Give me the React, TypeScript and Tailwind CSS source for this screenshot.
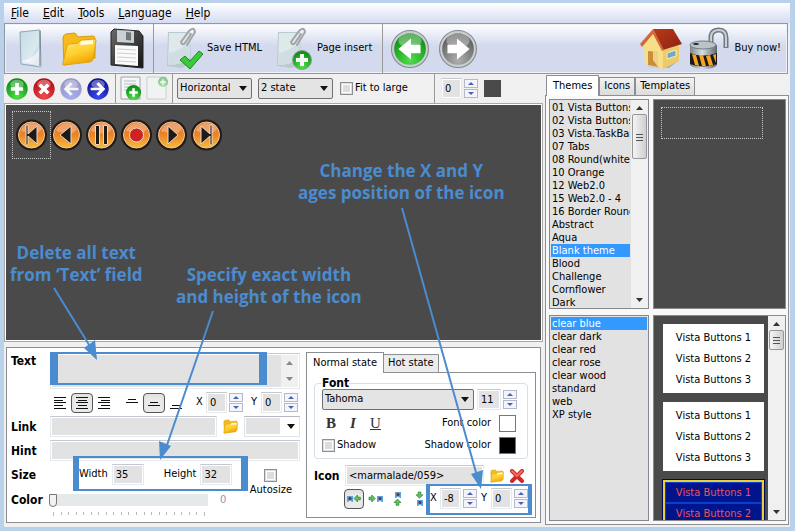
import React, { useState } from "react";

const THEMES = [
  "01 Vista Buttons",
  "02 Vista Buttons",
  "03 Vista.TaskBar",
  "07 Tabs",
  "08 Round(white",
  "10 Orange",
  "12 Web2.0",
  "15 Web2.0 - 4",
  "16 Border Round",
  "Abstract",
  "Aqua",
  "Blank theme",
  "Blood",
  "Challenge",
  "Cornflower",
  "Dark",
];

const STYLES = [
  "clear blue",
  "clear dark",
  "clear red",
  "clear rose",
  "clear wood",
  "standard",
  "web",
  "XP style",
];

const MENU = ["File", "Edit", "Tools", "Language", "Help"];

const field =
  "h-[21px] border border-[#e3e9ef] border-t-[#c4c8d0] bg-[#e2e2e2] outline-1 -outline-offset-2 outline-white px-[3px] text-black";

// Gradients shared by all of the icons
const Defs = () => (
  <svg className="absolute size-0" aria-hidden="true">
    <defs>
      <linearGradient id="paper" x1="0" y1="0" x2="1" y2="1">
        <stop offset="0" stopColor="#c5dbe3" />
        <stop offset="0.6" stopColor="#dbe9f0" />
        <stop offset="1" stopColor="#a9bccb" />
      </linearGradient>
      <linearGradient id="folder" x1="0" y1="0" x2="0.4" y2="1">
        <stop offset="0" stopColor="#ffe77a" />
        <stop offset="0.6" stopColor="#ffcf2e" />
        <stop offset="1" stopColor="#f0a808" />
      </linearGradient>
      <linearGradient id="floppy" x1="0" y1="0" x2="1" y2="1">
        <stop offset="0" stopColor="#6a6a6a" />
        <stop offset="1" stopColor="#151515" />
      </linearGradient>
      <radialGradient id="green" cx="0.5" cy="0.85" r="0.8">
        <stop offset="0" stopColor="#4fe04a" />
        <stop offset="1" stopColor="#0c8a14" />
      </radialGradient>
      <radialGradient id="red" cx="0.5" cy="0.85" r="0.8">
        <stop offset="0" stopColor="#f04a4a" />
        <stop offset="1" stopColor="#b00c14" />
      </radialGradient>
      <radialGradient id="blue" cx="0.5" cy="0.85" r="0.8">
        <stop offset="0" stopColor="#3a4af0" />
        <stop offset="1" stopColor="#0c128c" />
      </radialGradient>
      <radialGradient id="gray" cx="0.5" cy="0.85" r="0.8">
        <stop offset="0" stopColor="#b0b0b0" />
        <stop offset="1" stopColor="#5a5a5a" />
      </radialGradient>
      <linearGradient id="orange" x1="0" y1="0" x2="0" y2="1">
        <stop offset="0" stopColor="#e8742c" />
        <stop offset="0.5" stopColor="#ea8428" />
        <stop offset="1" stopColor="#f6bc3c" />
      </linearGradient>
      <linearGradient id="roof" x1="0" y1="0" x2="1" y2="1">
        <stop offset="0" stopColor="#b83a18" />
        <stop offset="1" stopColor="#8c2210" />
      </linearGradient>
      <linearGradient id="steel" x1="0" y1="0" x2="1" y2="0">
        <stop offset="0" stopColor="#7c868c" />
        <stop offset="0.45" stopColor="#d8e0e4" />
        <stop offset="1" stopColor="#5c666c" />
      </linearGradient>
    </defs>
  </svg>
);

const PageIcon = () => (
  <svg width="24" height="40" viewBox="0 0 24 40">
    <path d="M1 3 21 1l1 37L2 35Z" fill="url(#paper)" stroke="#8fa8b5" />
    <path d="M2 32C12 30 18 26 21 18l1 20Z" fill="#fff" opacity="0.6" />
    <path d="M21 2v35" stroke="#5f7684" />
  </svg>
);

const FolderIcon = ({ size = 36 }: { size?: number }) => (
  <svg width={size} height={size} viewBox="0 0 36 36">
    <path d="M2 7q0-3 3-4l9-1 3 4 15-1q2 0 2 3v19L3 34Z" fill="#f5bb1c" stroke="#d99a0c" />
    <path d="M6 15q0-2 2-2l9-1 3-3 13-1q2 0 2 2l-3 18q0 2-3 3L3 34q-2 0-1-2Z" fill="url(#folder)" stroke="#e0a312" />
    <path d="M20 10l12-1v4l-13 1Z" fill="#fffbe8" />
  </svg>
);

const FloppyIcon = () => (
  <svg width="36" height="42" viewBox="0 0 36 42">
    <path d="M2 4 5 1l25 2 4 5v32L2 37Z" fill="url(#floppy)" stroke="#222" />
    <path d="M8 2l17 1v12L8 14Z" fill="#c9d1d4" />
    <path d="M17 4l5 .4v8L17 12Z" fill="#6e7678" />
    <path d="M6 17l23 1v20L6 36Z" fill="#fafafa" />
    <path d="M8 21l19 1M8 25l19 1M8 29l19 1M8 33l19 1" stroke="#ccd0d2" />
  </svg>
);

const ClipPage = ({ children }: { children: React.ReactNode }) => (
  <svg width="38" height="44" viewBox="0 0 38 44">
    <path d="M2 5h22l1 32-10 4L1 39Z" fill="#b9c9d0" />
    <path d="M3 6h20l1 24q-8 8-22 8Z" fill="#e0e9ea" />
    <path d="M3 26q12-2 20-12l1 16q-8 8-22 8Z" fill="#d0dde2" />
    <path
      d="M25 7l-6 9q-3 3-4-1l8-11q5-5 6 1l-8 13"
      fill="none"
      stroke="#a2a6a8"
      strokeWidth="2"
      strokeLinecap="round"
    />
    {children}
  </svg>
);

type BallProps = { size: number; fill: string; d: string; rim?: boolean; faded?: boolean };

const Ball = ({ size, fill, d, rim, faded }: BallProps) => (
  <svg width={size} height={size} viewBox="0 0 36 36" className={faded ? "opacity-40" : ""}>
    {rim && <circle cx="18" cy="18" r="17.5" fill="#c9ced0" stroke="#85898c" />}
    <circle cx="18" cy="18" r={rim ? 15 : 17.5} fill={fill} />
    <ellipse cx="18" cy="10" rx="11" ry="7" fill="#fff" opacity="0.35" />
    <path d={d} fill="#fff" />
  </svg>
);

const PLUS = "M15 8h6v7h7v6h-7v7h-6v-7H8v-6h7Z";
const CROSS = "M13 9l5 5 5-5 4 4-5 5 5 5-4 4-5-5-5 5-4-4 5-5-5-5Z";
const LEFT = "M7 18 19 8v6h9v8h-9v6Z";
const RIGHT = "M29 18 17 8v6H8v8h9v6Z";
const THIN_LEFT = "M6 18 17 7l4 3-6 6h15v4H15l6 6-4 3Z";
const THIN_RIGHT = "M30 18 19 7l-4 3 6 6H6v4h15l-6 6 4 3Z";

const HouseIcon = () => (
  <svg width="44" height="43" viewBox="0 0 44 43">
    <path d="M6 38l10 3 22-6-8 6H14Z" fill="#a9afbb" />
    <path d="M5 17 15 5l10 17-1 20L6 37Z" fill="#f6df86" />
    <path d="M24 23l16-5v16l-16 8Z" fill="#ecca68" />
    <path d="M14 2h20l9 15-19 6Z" fill="url(#roof)" />
    <path d="M14 2 1 17l2 3L14 7l9 17 2-1Z" fill="#d4683a" />
    <path d="M9 24l10 1v15l-10-2Z" fill="#c98f38" />
    <path d="M14 24l5 1v15l-5-7Z" fill="#f0d088" />
    <path d="M28 26l9-3v6l-9 3Z" fill="#6ea9c8" stroke="#f7edc0" />
  </svg>
);

const LockIcon = () => (
  <svg width="40" height="43" viewBox="0 0 40 43">
    <path d="M22 18V9q1-6 8-6t7 8v10" fill="none" stroke="#6f7a80" strokeWidth="5" />
    <path d="M22 18V9q1-6 8-6t7 8v9" fill="none" stroke="#c8d0d4" strokeWidth="2" />
    <path d="M1 18v20q4 4 14 4t13-4V18Z" fill="url(#steel)" />
    <ellipse cx="14" cy="18" rx="13" ry="4" fill="#b9c3c8" stroke="#737d83" />
    <ellipse cx="7" cy="17" rx="3" ry="1" fill="#222" />
    <path d="M1 26q13 5 27 0v11q-14 5-27 0Z" fill="#1c1a18" />
    <path d="M3 27l4 1 3 11-4-1ZM10 28h4l3 11h-4ZM17 29l4-1 3 10-4 1ZM24 28l3-1v9Z" fill="#f8a420" />
  </svg>
);

const DocPlus = ({ faded }: { faded?: boolean }) => (
  <svg width="22" height="25" viewBox="0 0 22 25" className={faded ? "opacity-45" : ""}>
    <path d="M1 1h19v22H1Z" fill="#f4f7f7" stroke="#9aa6aa" />
    {!faded && <path d="M4 5h12M4 8h12M4 11h12M4 14h6" stroke="#b4bcc0" />}
    <g transform={faded ? "translate(12 1) scale(0.28)" : "translate(6 9) scale(0.42)"}>
      <circle cx="18" cy="18" r="18" fill="url(#green)" />
      <path d={PLUS} fill="#fff" />
    </g>
  </svg>
);

const MediaButton = ({ label, children }: { label: string; children: React.ReactNode }) => (
  <button aria-label={label}>
    <svg width="31" height="32" viewBox="0 0 31 32" className="block">
      <circle cx="15.5" cy="16" r="15.5" fill="#221c18" />
      <circle cx="15.5" cy="16" r="13" fill="url(#orange)" stroke="#f4c79a" />
      <path d="M5 12q3-8 11-8t10 6q-4 5-8 5Z" fill="#fff" opacity="0.3" />
      <g fill="#1e1a18" stroke="#ead9c8" strokeWidth="1">
        {children}
      </g>
    </svg>
  </button>
);

const Caret = () => (
  <svg width="8" height="5" viewBox="0 0 8 5" className="pointer-events-none absolute right-[5px] top-2">
    <path d="M0 0h8L4 5Z" fill="#111" />
  </svg>
);

type PickProps = { label: string; value: string; className: string; plain?: boolean };

const Pick = ({ label, value, className, plain }: PickProps) => (
  <div className={`relative ${className}`}>
    <select
      aria-label={label}
      className={`h-[21px] w-full appearance-none pl-0.5 pr-4 text-black ${
        plain
          ? "border border-[#dfe4ea] border-t-[#b4b8c0] bg-white"
          : "rounded-xs border border-[#707070] bg-[#e4e4e4]"
      }`}
    >
      <option>{value}</option>
    </select>
    {plain && <span className="pointer-events-none absolute left-0.5 top-0.5 h-4 w-[34px] bg-[#e2e2e2]" />}
    <Caret />
  </div>
);

const Arrow = ({ down }: { down?: boolean }) => (
  <svg width="6" height="3" viewBox="0 0 6 3">
    <path d={down ? "M0 0h6L3 3Z" : "M0 3h6L3 0Z"} fill="#4c60b4" />
  </svg>
);

type SpinProps = { id: string; label?: string; initial: number; wide?: boolean };

const Spin = ({ id, label, initial, wide }: SpinProps) => {
  const [value, setValue] = useState(initial);

  return (
    <div className="flex items-center gap-0.5">
      {label && (
        <label htmlFor={id} className="w-2">
          {label}
        </label>
      )}
      <input
        id={id}
        aria-label={label ?? id}
        value={value}
        onChange={(e) => setValue(Number(e.target.value) || 0)}
        className={`${field} ${wide ? "w-6" : "w-[21px]"}`}
      />
      <div className="flex flex-col gap-px">
        <button
          aria-label="Increase"
          onClick={() => setValue(value + 1)}
          className="flex h-[9px] w-[14px] items-center justify-center border border-[#b4b8cc] bg-[#f4f5fb]"
        >
          <Arrow />
        </button>
        <button
          aria-label="Decrease"
          onClick={() => setValue(value - 1)}
          className="flex h-[9px] w-[14px] items-center justify-center border border-[#b4b8cc] bg-[#f4f5fb]"
        >
          <Arrow down />
        </button>
      </div>
    </div>
  );
};

const box =
  "size-[13px] appearance-none border border-[#8e8f8f] bg-[#dcdcdc] outline-1 -outline-offset-3 outline-white checked:bg-[#4a78c8]";

const ScrollBar = ({ thumb, dim }: { thumb?: string; dim?: boolean }) => (
  <div className="flex w-[17px] shrink-0 flex-col items-center justify-between bg-[#f0f0f0] py-1.5">
    <svg width="7" height="4" viewBox="0 0 7 4" className="shrink-0">
      <path d="M0 4h7L3.5 0Z" fill={dim ? "#888" : "#333"} />
    </svg>
    {thumb && (
      <div
        className={`mt-1 mb-auto flex w-[15px] items-center justify-center rounded-xs border border-[#979797] bg-linear-to-r from-[#f4f4f4] to-[#cfcfcf] ${thumb}`}
      >
        <svg width="7" height="8" viewBox="0 0 7 8">
          <path d="M0 1.5h7M0 4.5h7M0 7.5h7" stroke="#555" />
        </svg>
      </div>
    )}
    <svg width="7" height="4" viewBox="0 0 7 4" className="shrink-0">
      <path d="M0 0h7L3.5 4Z" fill={dim ? "#888" : "#333"} />
    </svg>
  </div>
);

type ListProps = { label: string; items: string[]; initial: string; scroll?: boolean };

const ListBox = ({ label, items, initial, scroll }: ListProps) => {
  const [selected, setSelected] = useState(initial);

  return (
    <div className="flex w-[100px] shrink-0 overflow-hidden border border-[#828790] bg-[#e2e2e2]">
      <ul aria-label={label} className="min-w-0 flex-1 px-px pt-px">
        {items.map((item) => (
          <li key={item}>
            <button
              onClick={() => setSelected(item)}
              className={`block h-[13px] w-full overflow-hidden whitespace-nowrap pl-px text-left leading-[13px] ${
                item === selected ? "bg-[#3399ff] text-white" : ""
              }`}
            >
              {item}
            </button>
          </li>
        ))}
      </ul>
      {scroll && <ScrollBar thumb="h-[45px]" />}
    </div>
  );
};

const AlignIcon = ({ d, label, active }: { d: string; label: string; active?: boolean }) => (
  <button
    aria-label={label}
    className={`flex h-5 w-[22px] items-center justify-center ${
      active ? "rounded-sm border border-[#555] bg-[#eaeaea] shadow-inner" : ""
    }`}
  >
    <svg width="13" height="12" viewBox="0 0 13 12">
      <path d={d} stroke="#111" />
    </svg>
  </button>
);

const ARROWS: Record<string, string> = {
  left: "M0 5l5-5v3h4v4H5v3Z",
  right: "M9 5 4 0v3H0v4h4v3Z",
  up: "M5 0l5 5H7v4H3V5H0Z",
  down: "M5 9 0 4h3V0h4v4h3Z",
};

const Person = ({ x, y }: { x: number; y: number }) => (
  <g transform={`translate(${x} ${y})`}>
    <rect width="6" height="6" fill="#5aa0e0" />
    <circle cx="3" cy="2.5" r="1.5" fill="#5a3a28" />
    <path d="M1 6q2-3 4 0Z" fill="#f4e4d8" />
  </g>
);

type PlaceProps = { label: string; dir: string; px: number; py: number; ax: number; ay: number; active?: boolean };

const PlaceIcon = ({ label, dir, px, py, ax, ay, active }: PlaceProps) => (
  <button
    aria-label={label}
    className={`flex size-5 items-center justify-center ${
      active ? "rounded-sm border border-[#555] bg-[#eaeaea] shadow-inner" : ""
    }`}
  >
    <svg width="16" height="16" viewBox="0 0 16 16" className="shrink-0">
      <Person x={px} y={py} />
      <path d={ARROWS[dir]} transform={`translate(${ax} ${ay}) scale(0.7)`} fill="#5fc060" stroke="#2c8a38" />
    </svg>
  </button>
);

const Separator = () => <span className="w-px self-stretch bg-[#9a9a9a]" />;

const MenuBar = () => (
  <nav className="flex h-5 items-center gap-3.5 bg-linear-to-b from-white via-[#e9edf8] via-50% to-[#d5dcef] pl-[7px] text-xs">
    {MENU.map((item) => (
      <button key={item}>
        <span className="underline">{item[0]}</span>
        {item.slice(1)}
      </button>
    ))}
  </nav>
);

const Toolbar = () => (
  <div className="mr-0.5 flex h-[51px] items-center border border-[#9298a2] bg-linear-to-b from-white to-[#d3daed] to-45% shadow-[inset_0_0_0_1px_#eef1f8]">
    <div className="flex h-full items-center gap-3 pl-[14px] pr-2">
      <button aria-label="New">
        <PageIcon />
      </button>
      <button aria-label="Open" className="ml-1.5">
        <FolderIcon />
      </button>
      <button aria-label="Save">
        <FloppyIcon />
      </button>
    </div>
    <Separator />
    <button className="ml-3 flex items-center gap-[3px]">
      <ClipPage>
        <path d="M14 33l5-4 5 5 9-10 4 3-13 15Z" fill="#3cc83c" stroke="#178c1c" />
      </ClipPage>
      Save HTML
    </button>
    <button className="ml-3.5 flex items-center gap-[3px]">
      <ClipPage>
        <circle cx="26" cy="33" r="9.5" fill="url(#green)" stroke="#8ea090" />
        <path d="M24 27h4v4h4v4h-4v4h-4v-4h-4v-4h4Z" fill="#f4f8f4" />
      </ClipPage>
      Page insert
    </button>
    <span className="w-2.5" />
    <Separator />
    <div className="ml-2 flex gap-2.5">
      <button aria-label="Back">
        <Ball size={38} fill="url(#green)" d={LEFT} rim />
      </button>
      <button aria-label="Forward">
        <Ball size={38} fill="url(#gray)" d={RIGHT} rim />
      </button>
    </div>
    <button aria-label="Home" className="ml-auto">
      <HouseIcon />
    </button>
    <button className="ml-1.5 mr-1.5 flex items-center gap-1.5">
      <LockIcon />
      Buy now!
    </button>
  </div>
);

const ItemBar = () => (
  <div className="flex h-[29px] items-center pl-0.5">
    <div className="flex gap-[5px]">
      <button aria-label="Add item">
        <Ball size={22} fill="url(#green)" d={PLUS} />
      </button>
      <button aria-label="Delete item">
        <Ball size={22} fill="url(#red)" d={CROSS} />
      </button>
      <button aria-label="Previous item">
        <Ball size={22} fill="url(#blue)" d={THIN_LEFT} faded />
      </button>
      <button aria-label="Next item">
        <Ball size={22} fill="url(#blue)" d={THIN_RIGHT} />
      </button>
    </div>
    <span className="w-1.5" />
    <Separator />
    <div className="flex gap-1 px-1">
      <button aria-label="Add submenu">
        <DocPlus />
      </button>
      <button aria-label="Add subitem">
        <DocPlus faded />
      </button>
    </div>
    <Separator />
    <Pick label="Orientation" value="Horizontal" className="ml-1 w-[75px]" />
    <Pick label="States" value="2 state" className="ml-1.5 w-[75px]" />
    <label className="ml-[7px] flex items-center gap-0.5">
      <input type="checkbox" className={box} />
      Fit to large
    </label>
    <div className="ml-auto mr-11 flex items-center gap-1.5 self-stretch">
      <Separator />
      <Spin id="spacing" initial={0} />
      <button aria-label="Background color" className="size-[17px] bg-[#4a4a4a]" />
    </div>
  </div>
);

const Canvas = () => (
  <div className="mr-0.5 flex flex-1 items-start border border-[#a8a8a8] bg-[#4a4a4a] outline-1 -outline-offset-2 outline-white p-[7px]">
    <div className="flex h-12 items-center gap-1">
      <div className="-mr-1 flex h-12 items-center border border-dotted border-[#c8c8c8] px-[3px]">
        <MediaButton label="First">
          <path d="M10 6h2v9l9-8v18l-9-8v9h-2Z" />
        </MediaButton>
      </div>
      <MediaButton label="Previous">
        <path d="M9 16 20 7v18Z" />
      </MediaButton>
      <MediaButton label="Pause">
        <path d="M9.5 6.5h4v19h-4ZM17.5 6.5h4v19h-4Z" />
      </MediaButton>
      <MediaButton label="Record">
        <circle cx="15.5" cy="16" r="7" fill="#d02222" />
      </MediaButton>
      <MediaButton label="Play">
        <path d="M22 16 12 7v18Z" />
      </MediaButton>
      <MediaButton label="Last">
        <path d="M10 7l9 8V6h2v20h-2v-9l-9 8Z" />
      </MediaButton>
    </div>
  </div>
);

const ItemForm = () => (
  <div className="flex w-[293px] shrink-0 flex-col gap-[3px] pl-1 pt-[5px]">
    <div className="flex">
      <label htmlFor="text" className="w-[39px] text-xs font-bold">
        Text
      </label>
      <div className="flex h-9 flex-1 border border-[#e3e9ef] border-t-[#c4c8d0] p-px">
        <textarea id="text" className="min-w-0 flex-1 resize-none bg-[#e2e2e2]" />
        <ScrollBar dim />
      </div>
    </div>
    <div className="flex h-[21px] items-center pl-[38px]">
      <AlignIcon label="Align left" d="M0 .5h12M0 3.5h9M0 5.5h12M0 8.5h9M0 11.5h12" />
      <AlignIcon label="Align center" active d="M0 .5h12M2 3.5h9M0 5.5h12M2 8.5h9M0 11.5h12" />
      <AlignIcon label="Align right" d="M0 .5h12M3 3.5h9M0 5.5h12M3 8.5h9M0 11.5h12" />
      <span className="w-1.5" />
      <AlignIcon label="Align top" d="M2 2.5h8M0 5.5h12" />
      <AlignIcon label="Align middle" active d="M2 5.5h8M0 8.5h12" />
      <AlignIcon label="Align bottom" d="M2 8.5h8M0 11.5h12" />
      <div className="ml-auto flex gap-2 pr-0.5">
        <Spin id="text-x" label="X" initial={0} />
        <Spin id="text-y" label="Y" initial={0} />
      </div>
    </div>
    <div className="flex items-center">
      <label htmlFor="link" className="w-[39px] text-xs font-bold">
        Link
      </label>
      <input id="link" className={`${field} min-w-0 flex-1`} />
      <button aria-label="Browse link" className="mx-1.5">
        <FolderIcon size={15} />
      </button>
      <Pick label="Link target" value="" className="w-14" plain />
    </div>
    <div className="flex items-center">
      <label htmlFor="hint" className="w-[39px] text-xs font-bold">
        Hint
      </label>
      <input id="hint" className={`${field} min-w-0 flex-1`} />
    </div>
    <div className="flex h-[21px] items-center">
      <span className="w-[68px] text-xs font-bold">Size</span>
      <label className="flex items-center gap-1">
        Width
        <input defaultValue="35" className={`${field} w-8 border-[#7ab0e0]`} />
      </label>
      <label className="ml-5 flex items-center gap-1">
        Height
        <input defaultValue="32" className={`${field} w-8`} />
      </label>
      <label className="ml-auto mr-2 mt-[18px] flex flex-col items-center leading-4">
        <input type="checkbox" className={box} />
        Autosize
      </label>
    </div>
    <div className="flex items-center pt-1">
      <label htmlFor="color" className="w-[38px] text-xs font-bold">
        Color
      </label>
      <div className="w-[159px]">
        <input
          id="color"
          type="range"
          defaultValue={0}
          className="block h-3 w-full appearance-none bg-[#e5e9e9] [&::-webkit-slider-thumb]:h-[13px] [&::-webkit-slider-thumb]:w-2 [&::-webkit-slider-thumb]:appearance-none [&::-webkit-slider-thumb]:rounded-b-sm [&::-webkit-slider-thumb]:border [&::-webkit-slider-thumb]:border-[#777] [&::-webkit-slider-thumb]:bg-[#f2f2f2]"
        />
      </div>
      <output htmlFor="color" className="ml-3 text-[#a090a8]">
        0
      </output>
    </div>
    <div className="flex w-[152px] justify-between self-start ml-[42px]">
      {Array.from({ length: 21 }, (_, i) => (
        <span key={i} className={`w-px bg-[#b8b8b8] ${i % 20 === 0 ? "h-1" : "h-[3px]"}`} />
      ))}
    </div>
  </div>
);

const StatePane = () => {
  const [tab, setTab] = useState("Normal state");

  return (
    <div className="flex min-w-0 flex-1 flex-col pb-1 pl-1.5 pr-1 pt-1">
      <div className="flex items-end">
        {["Normal state", "Hot state"].map((name) => (
          <button
            key={name}
            onClick={() => setTab(name)}
            className={`whitespace-nowrap border border-b-0 border-[#8c8e94] ${
              name === tab ? "relative -mb-px h-[21px] bg-white px-1.5" : "-ml-px h-[18px] bg-[#ececec] px-1"
            }`}
          >
            {name}
          </button>
        ))}
      </div>
      <div className="flex flex-1 flex-col border border-[#8c8e94] px-[7px] pt-0.5">
        <fieldset className="flex h-[84px] flex-col gap-1 rounded-sm border border-[#d5dfe5] px-[7px]">
          <legend className="text-xs font-bold leading-4">Font</legend>
          <div className="-mt-0.5 flex items-center">
            <Pick label="Font family" value="Tahoma" className="min-w-0 flex-1" />
            <span className="w-[3px]" />
            <Spin id="font-size" initial={11} wide />
            <span className="w-[3px]" />
          </div>
          <div className="flex h-[18px] items-center pl-1">
            <div className="flex flex-1 gap-3 text-[15px] leading-4 text-[#333] [font-family:'Liberation_Serif',serif]">
              <button aria-label="Bold" className="w-2.5 font-bold">B</button>
              <button aria-label="Italic" className="w-2.5 font-bold italic">I</button>
              <button aria-label="Underline" className="w-2.5 underline">U</button>
            </div>
            <span>Font color</span>
            <button aria-label="Font color" className="ml-2 mr-1 size-[17px] border border-[#777] bg-white" />
          </div>
          <div className="flex h-[18px] items-center">
            <label className="flex flex-1 items-center gap-0.5">
              <input type="checkbox" className={box} />
              Shadow
            </label>
            <span>Shadow color</span>
            <button aria-label="Shadow color" className="ml-2 mr-1 size-[17px] border border-[#777] bg-black" />
          </div>
        </fieldset>
        <div className="mt-1.5 flex items-center">
          <label htmlFor="icon" className="w-[31px] text-xs font-bold">
            Icon
          </label>
          <input id="icon" defaultValue="<marmalade/059>" className={`${field} min-w-0 flex-1`} />
          <button aria-label="Browse icon" className="mx-1.5">
            <FolderIcon size={14} />
          </button>
          <button aria-label="Remove icon" className="mr-1">
            <svg width="14" height="14" viewBox="0 0 14 14">
              <path d="M2 2l10 10M12 2 2 12" stroke="#d02828" strokeWidth="4" strokeLinecap="round" />
              <path d="M2 2l5 5 5-5" stroke="#f06a5a" strokeWidth="2" fill="none" strokeLinecap="round" />
            </svg>
          </button>
        </div>
        <div className="mt-0.5 flex items-center justify-between">
          <div className="ml-[30px] flex gap-0.5">
            <PlaceIcon label="Icon left" active dir="left" px={1} py={5} ax={8} ay={4} />
            <PlaceIcon label="Icon right" dir="right" px={9} py={5} ax={1} ay={4} />
            <PlaceIcon label="Icon top" dir="up" px={5} py={1} ax={4} ay={8} />
            <PlaceIcon label="Icon bottom" dir="down" px={5} py={9} ax={4} ay={1} />
          </div>
          <div className="flex gap-1 pr-0.5">
            <Spin id="icon-x" label="X" initial={-8} />
            <Spin id="icon-y" label="Y" initial={0} />
          </div>
        </div>
      </div>
    </div>
  );
};

const note =
  "absolute whitespace-nowrap text-center text-[17px] font-bold leading-[22px] text-[#4b8bd0] [font-family:'Open_Sans','Noto_Sans',sans-serif]";

// Notes, arrows and frames that point at the fields
const Notes = () => (
  <div className="pointer-events-none absolute inset-0">
    <p className={`${note} left-[6px] top-[168px]`}>
      Delete all text
      <br />
      from ‘Text’ field
    </p>
    <p className={`${note} left-[172px] top-[190px]`}>
      Specify exact width
      <br />
      and height of the icon
    </p>
    <p className={`${note} left-[294px] top-[86px]`}>
      Change the X and Y
      <br />
      ages position of the icon
    </p>
    <svg width="540" height="449" viewBox="4 74 540 449" className="absolute left-0 top-0" fill="#4b8bd0">
      <path
        d="M50 352h217v33H50ZM58 354v29h201v-29ZM73 456h175v35H73ZM79 458v31h162v-31ZM426 484h106v31H426ZM430 486v27h98v-27Z"
        fillRule="evenodd"
      />
      <path d="M54 288 91 348M213 311 166 448M402 208 477 476" stroke="#4b8bd0" strokeWidth="2" />
      <path d="M97 360 84 348 95 340ZM160 460 159 441 171 446ZM481 489 471 474 483 470Z" />
    </svg>
  </div>
);

const Sample = ({ dark }: { dark?: boolean }) => (
  <ul
    className={`w-[101px] shrink-0 text-center leading-[21px] ${
      dark ? "border-2 border-[#e8d040] bg-[#00148c] text-[#f05050] outline-1 outline-[#000850]" : "bg-white py-[3px]"
    }`}
  >
    {[1, 2, 3].map((n) => (
      <li key={n} className={dark ? "border border-[#0a40d0] leading-[19px]" : ""}>
        Vista Buttons {n}
      </li>
    ))}
  </ul>
);

const Gallery = () => {
  const [tab, setTab] = useState("Themes");

  return (
    <aside className="flex w-[244px] shrink-0 flex-col pb-0.5 pt-px">
      <div className="flex items-end pl-px">
        {["Themes", "Icons", "Templates"].map((name) => (
          <button
            key={name}
            onClick={() => setTab(name)}
            className={`border border-b-0 border-[#8c8e94] ${
              name === tab
                ? "relative -mb-px h-[21px] bg-white px-1.5"
                : "h-[18px] bg-linear-to-b from-[#f2f2f2] to-[#dcdcdc] px-1"
            }`}
          >
            {name}
          </button>
        ))}
      </div>
      <div className="flex grow basis-px flex-col gap-1.5 border border-[#8c8e94] bg-[#f8f8f8] p-[3px] pr-0.5">
        <div className="flex h-[210px] shrink-0 gap-1">
          <ListBox label="Themes" items={THEMES} initial="Blank theme" scroll />
          <div className="flex-1 border border-[#8a8a8a] bg-[#4a4a4a] px-[7px] pt-[7px]">
            <div className="h-8 w-[102px] border border-dotted border-[#c8c8c8]" />
          </div>
        </div>
        <div className="flex min-h-[180px] grow basis-px gap-1 overflow-hidden">
          <ListBox label="Styles" items={STYLES} initial="clear blue" />
          <div className="flex flex-1 overflow-hidden border border-[#8a8a8a] bg-[#4a4a4a]">
            <div className="flex flex-1 flex-col gap-[9px] overflow-hidden pl-[9px] pt-2">
              <Sample />
              <Sample />
              <Sample dark />
            </div>
            <ScrollBar thumb="h-5" />
          </div>
        </div>
      </div>
    </aside>
  );
};

const App = () => {
  return (
    <div className="flex min-h-screen flex-col bg-[#b9d1ea] pb-1 pl-1 pr-[5px] pt-[3px] text-[11px] text-black [font-family:'DejaVu_Sans_Condensed','Noto_Sans',sans-serif]">
      <Defs />
      <div className="flex flex-1 flex-col bg-[#f0f0f0]">
        <MenuBar />
        <Toolbar />
        <main className="flex flex-1 pr-px">
          <section className="relative flex min-w-0 flex-1 flex-col pb-1">
            <ItemBar />
            <Canvas />
            <div className="ml-0.5 mr-1 mt-[5px] flex h-44 border border-[#8c8e94] bg-white">
              <ItemForm />
              <StatePane />
            </div>
            <Notes />
          </section>
          <Gallery />
        </main>
      </div>
    </div>
  );
};

export default App;
